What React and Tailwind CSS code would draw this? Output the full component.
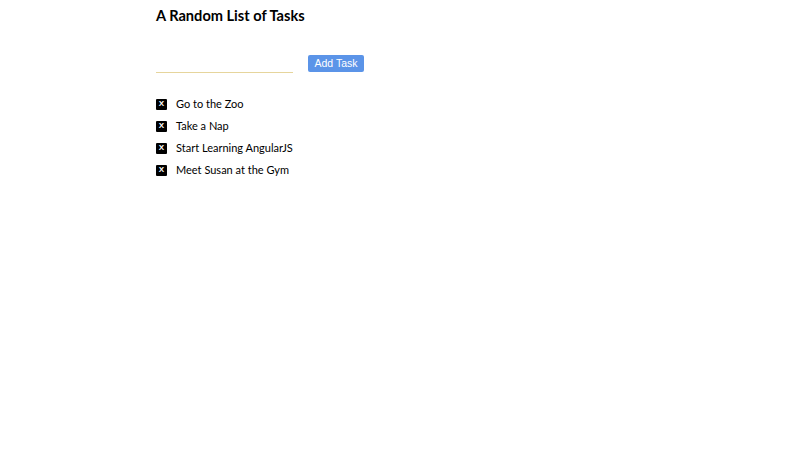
import { useState } from "react";

const tasks = [
  "Go to the Zoo",
  "Take a Nap",
  "Start Learning AngularJS",
  "Meet Susan at the Gym",
];

export default function App() {
  const [items, setItems] = useState(tasks);
  const [text, setText] = useState("");

  const addTask = () => {
    if (!text.trim()) return;
    setItems([...items, text.trim()]);
    setText("");
  };

  return (
    <div className="min-h-[450px] bg-white pl-[156px] pt-[6px] font-['Lato',sans-serif] text-black">
      <h1 className="text-[14.6px] font-bold leading-[20px]">A Random List of Tasks</h1>

      <div className="mt-[29px] flex items-end">
        <input
          value={text}
          onChange={(e) => setText(e.target.value)}
          className="h-[17px] w-[137px] border-b border-[#e6d59c] bg-transparent text-[11px] outline-none"
        />
        <button
          onClick={addTask}
          className="ml-[15px] mb-[1px] h-[17px] w-[56px] rounded-[2px] bg-[#5b94e8] font-['Liberation_Sans',sans-serif] text-[10.5px] leading-[17px] text-white"
        >
          Add Task
        </button>
      </div>

      <ul className="mt-[23px] flex flex-col gap-[6px]">
        {items.map((task, i) => (
          <li key={i} className="flex h-[16px] items-center text-[11px]">
            <button
              onClick={() => setItems(items.filter((_, j) => j !== i))}
              className="flex h-[11px] w-[11px] items-center justify-center rounded-[1px] bg-black font-['Liberation_Sans',sans-serif] text-[8px] font-bold leading-none text-white"
            >
              X
            </button>
            <span className="ml-[9px]">{task}</span>
          </li>
        ))}
      </ul>
    </div>
  );
}
